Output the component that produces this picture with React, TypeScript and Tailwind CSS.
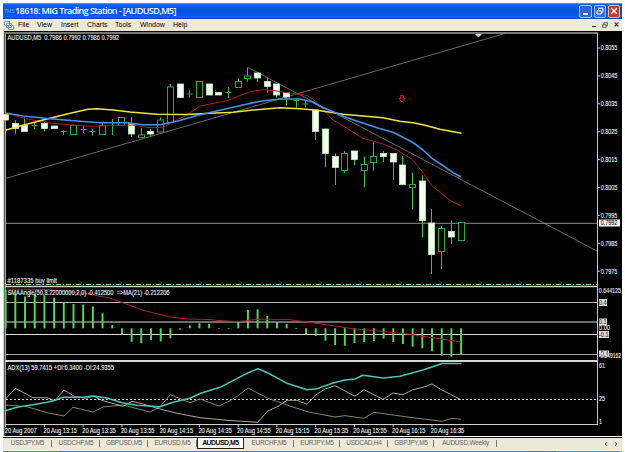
import { ChevronLeft } from "lucide-react";

type Kind = "up" | "down" | "doji";
// [kind, high, low, body top, body bottom]
type Candle = [Kind, number, number, number, number];

const CANDLES: Candle[] = [
  ["down", 114, 120, 114.5, 120],
  ["down", 120, 134, 123.5, 128.5],
  ["down", 117.5, 131.5, 125.5, 131.5],
  ["doji", 122.5, 129, 125.5, 125.5],
  ["down", 122, 131.5, 123.5, 128.5],
  ["down", 126, 128.5, 126, 128.5],
  ["doji", 130, 135, 131.5, 131.5],
  ["up", 125.5, 134.5, 125.5, 134.5],
  ["doji", 125.5, 133, 129.5, 129.5],
  ["doji", 129, 135.5, 131.5, 131.5],
  ["up", 123, 134.5, 125.5, 134.5],
  ["doji", 119, 135, 122.5, 122.5],
  ["up", 117.5, 125.5, 117.5, 125.5],
  ["down", 117, 137, 123.5, 134],
  ["up", 128, 137.5, 135, 137.5],
  ["down", 129, 137, 131.5, 134],
  ["up", 117.5, 132, 120, 132],
  ["up", 84, 122.5, 87, 122.5],
  ["down", 84, 97.5, 84, 97.5],
  ["doji", 89.5, 97.5, 94, 94],
  ["up", 81.5, 97.5, 81.5, 97.5],
  ["down", 84, 95, 84, 95],
  ["down", 92.5, 95, 92.5, 95],
  ["doji", 87, 98, 92.5, 92.5],
  ["up", 78.5, 87.5, 81.5, 87.5],
  ["up", 67.5, 81.5, 76, 78.5],
  ["down", 72, 82, 73, 78],
  ["down", 77.5, 92.5, 81.5, 86.5],
  ["down", 84, 97.5, 84, 95],
  ["down", 92.5, 105.5, 92.5, 97],
  ["doji", 99, 108, 100.5, 100.5],
  ["doji", 100.5, 107.5, 104, 104],
  ["down", 110, 140, 110, 131.5],
  ["down", 129, 167.5, 129, 153.5],
  ["down", 153.5, 185, 156.5, 167.5],
  ["up", 151, 173, 153.5, 170.5],
  ["down", 151, 165.5, 151, 159.5],
  ["up", 156.5, 187.5, 164.5, 170.5],
  ["up", 142, 170.5, 156.5, 162.5],
  ["down", 151, 162, 153.5, 156.5],
  ["down", 153.5, 180, 153.5, 162],
  ["down", 156, 184.5, 165, 184.5],
  ["up", 172.5, 209.5, 184.5, 187.5],
  ["down", 175.5, 237.5, 181, 220.5],
  ["down", 209, 274, 223, 254.5],
  ["up", 226, 269, 228.5, 251.5],
  ["down", 220.5, 244, 231.5, 237],
  ["up", 222.5, 240.5, 222.5, 240.5],
];

// end of each histogram bar, measured from the zero line
const ZERO_Y = 328.3;
const ANGLE = [
  290, 294, 296.5, 294, 295.5, 297.7, 302.5, 304, 304.5, 306.5, 313.3, 325,
  334.3, 341.7, 343.3, 340, 341.3, 338.3, 329.7, 325.3, 323.3, 324, 329, 329,
  322, 310, 309.3, 316, 322, 324, 329, 334.3, 336, 340.7, 345, 345.7, 343, 342,
  341, 338.7, 342, 344, 346.7, 348.3, 351.3, 355.7, 356.7, 354.7,
];

const MA_YELLOW =
  "5.5,130.3 20,126 43,120 67,114 88,109.3 97,108.7 113,110 130,112 157,114.3 187,114.5 205,113.5 233,112.3 253,110 280,107.7 300,108.7 317,110.3 343,114.3 383,117.7 400,121.3 413,122.7 423,124.7 440,129.3 461.5,133.3";
const MA_BLUE =
  "5.5,113 23,116 50,118.7 80,121.3 100,122.7 127,122.7 143,124.7 160,124.7 177,121.3 197,115.5 208,113 220,110.3 243,105 260,101.3 280,99 300,99 312,101.7 323,107.7 337,113.3 347,117.7 377,127.7 393,132.3 413,142.5 423,150 432,158.3 442,165 453,172.7 461,176.7";
const MA_RED =
  "5.5,113 27,119 53,123.3 73,125 90,126.3 113,125.5 133,125 147,127.5 163,127.7 173,121.7 187,115 200,106 227,100.7 250,91.7 263,89.7 275,90.7 287,92.7 307,95.3 315,100.7 323,109.3 333,120 347,128.3 363,138.3 383,144 397,150 412,159.3 423,172.3 432,186 452,201.7 461,205.7";
const ANGLE_MA =
  "5.5,289 50,289.7 67,291.5 87,294 110,298 122,302.5 143,310.3 170,317 187,319 210,319.5 217,320.3 237,321.7 257,319.3 287,319.3 307,322 333,325.7 353,328.7 380,331.3 410,334.3 430,337.3 461,342";
const ADX =
  "5,410.7 17,407.3 30,405.3 47,402.3 55,400.3 63,397.3 83,397.3 93,396 107,398 122,402.7 137,405.3 160,406.7 173,402.3 190,398.3 200,393.5 220,387.3 247,373.3 258,368.7 268,373 287,383.3 307,389.7 317,388.7 333,383 345,380 355,379 363,375.3 383,378 400,376.3 423,370 442,363.5 461.5,363.5";
const DI_MINUS =
  "5.5,399 15.3,388.3 33,397.7 47,397.7 55,400.7 64,390 75,396.7 87,398.3 93,396 103,400.7 123,406.3 132,401.3 143,404 160,409 177,413.3 200,417.7 227,420.3 257.7,422.3 267.7,411 278,406.3 287,400.3 297,400.3 307,404.3 315.7,395 325,389 335,385.7 355,396.3 364,389.7 383,399.3 393,393 403,394.7 412.7,389.7 423,387.3 432,384 442,390 461,399.7";
const DI_PLUS =
  "5.5,405 27,406.7 47,412.7 64,416 73,407.3 93,412 103,407 123,405 150,412 160,406.7 170.3,394.7 190,402.7 200,399 210,402.7 219,406 230,400.7 238,395.7 248,388 268,398.3 287,405 307,411.7 335,417 345,415.7 364,418.3 374,412.3 410,417.3 442,421.3 452,418.3 461,419.3";

const PRICES = ["0.8055", "0.8045", "0.8035", "0.8025", "0.8015", "0.8005", "0.7995", "0.7985", "0.7975"];
const TIMES = ["2007", "13:15", "13:35", "13:55", "14:15", "14:35", "14:55", "15:15", "15:35", "15:55", "16:15", "16:35"];

const MENU = [
  { label: "File", width: "w-[19px]" },
  { label: "View", width: "w-[24px]" },
  { label: "Insert", width: "w-[26px]" },
  { label: "Charts", width: "w-[28px]" },
  { label: "Tools", width: "w-[25px]" },
  { label: "Window", width: "w-[33px]" },
  { label: "Help", width: "w-[20px]" },
];

const TABS = [
  { label: "USDJPY,M5", width: "w-[49px]" },
  { label: "USDCHF,M5", width: "w-[48px]" },
  { label: "GBPUSD,M5", width: "w-[48px]" },
  { label: "EURUSD,M5", width: "w-[49px]" },
  { label: "AUDUSD,M5", width: "w-[47px]", active: true },
  { label: "EURCHF,M5", width: "w-[50px]" },
  { label: "EURJPY,M5", width: "w-[46px]" },
  { label: "USDCAD,H4", width: "w-[48px]" },
  { label: "GBPJPY,M5", width: "w-[46px]" },
  { label: "AUDUSD,Weekly", width: "w-[63px]" },
];

const barX = (i: number) => 5.6 + i * 9.69;

function Label({ x, y, w, fill = "#f2f2f2", children }: { x: number; y: number; w: number; fill?: string; children: string }) {
  return (
    <text
      x={x}
      y={y + 2.4}
      textLength={w}
      lengthAdjust="spacingAndGlyphs"
      fill={fill}
      stroke={fill}
      strokeWidth="0.1"
      className="whitespace-pre text-[6.6px]"
    >
      {children}
    </text>
  );
}

function CandleShape({ candle, index }: { candle: Candle; index: number }) {
  const [kind, high, low, top, bottom] = candle;
  const x = Math.round(barX(index) - 0.5) + 0.5;
  if (kind === "doji") {
    return <path d={`M${x} ${high}V${low}M${x - 3} ${top}h6`} stroke="#2fae3a" fill="none" />;
  }
  return (
    <g stroke="#3fc04a">
      <line x1={x} x2={x} y1={high} y2={low} />
      <rect
        x={x - 3}
        y={top}
        width={6}
        height={bottom - top}
        fill={kind === "down" ? "#f4fff0" : "#000"}
        stroke={kind === "down" ? "#c4f5bf" : "#2fa63a"}
        strokeWidth={kind === "down" ? 0.8 : 1}
      />
    </g>
  );
}

function Chart() {
  return (
    <svg width="619" height="405" viewBox="3 31 619 405" className="block shrink-0 bg-black">
      {/* window frame */}
      <rect x="3" y="31" width="1" height="405" fill="#d5d2c8" />
      <rect x="4" y="32" width="1" height="404" fill="#55554f" />
      <rect x="5" y="33" width="1" height="391" fill="#a5a5a5" />
      <rect x="4" y="32" width="594" height="2" fill="#777772" />

      {/* trend lines and bid price */}
      <g stroke="#858585" strokeWidth="0.8">
        <line x1="5.5" y1="178.5" x2="505" y2="33.5" />
        <line x1="248" y1="67.5" x2="597" y2="251" />
        <line x1="6" y1="223.3" x2="598" y2="223.3" stroke="#8c8c8c" strokeWidth="1" />
      </g>

      {CANDLES.map((c, i) => (
        <CandleShape key={i} candle={c} index={i} />
      ))}
      <g fill="none" strokeLinejoin="round">
        <polyline points={MA_RED} stroke="#a81c1c" strokeWidth="1" />
        <polyline points={MA_YELLOW} stroke="#eee63c" strokeWidth="1.5" />
        <polyline points={MA_BLUE} stroke="#3f94e8" strokeWidth="1.6" />
      </g>
      <path d="M400.5 95.5h3v3h1.5L402 102l-3-3.5h1.5z" fill="#300" stroke="#d42020" strokeWidth="0.9" />
      <path d="M475 34h7l-3.5 3.5z" fill="#d8d8d8" />

      {/* pending order */}
      <line x1="6" y1="284.5" x2="597" y2="284.5" stroke="#8ad88a" strokeDasharray="5 2 1 2" />
      <Label x={7.5} y={280.5} w={49.5}>#1187335 buy limit</Label>
      <Label x={7.5} y={38} w={111.5}>AUDUSD,M5  0.7986 0.7992 0.7986 0.7992</Label>

      {/* angle indicator */}
      <g stroke="#b8b8b8">
        <line x1="5" x2="598" y1="286.5" y2="286.5" stroke="#d4d4d4" strokeWidth="1.4" />
        <line x1="5" x2="598" y1="302.5" y2="302.5" />
        <line x1="5" x2="598" y1="322" y2="322" stroke="#909090" strokeWidth="1.4" />
        <line x1="5" x2="598" y1="334.5" y2="334.5" stroke="#dedede" />
        <line x1="5" x2="598" y1="354.5" y2="354.5" stroke="#a8a8a8" />
        <line x1="5" x2="598" y1="361" y2="361" stroke="#d6d6d2" strokeWidth="2" />
      </g>
      {ANGLE.map((y, i) => (
        <rect
          key={i}
          x={barX(i) - 0.9}
          y={Math.min(y, ZERO_Y)}
          width="1.9"
          height={Math.abs(y - ZERO_Y)}
          fill="#52dc52"
        />
      ))}
      <polyline points={ANGLE_MA} fill="none" stroke="#b02020" />
      <Label x={7.5} y={292.5} w={162}>SMAAngle(50,8.22000000,2,0) -0.412500  =&gt;MA(21) -0.212206</Label>

      {/* ADX */}
      <line x1="6" x2="597" y1="399.5" y2="399.5" stroke="#d0d0d0" strokeDasharray="2 2" />
      <g fill="none" strokeLinejoin="round">
        <polyline points={DI_PLUS} stroke="#8c9a5c" strokeWidth="0.9" />
        <polyline points={DI_MINUS} stroke="#c4b8ae" strokeWidth="0.9" />
        <polyline points={ADX} stroke="#48c4b8" strokeWidth="1.5" />
      </g>
      <Label x={7.5} y={367.5} w={106.5}>ADX(13) 59.7415 +DI:6.3400 -DI:24.9355</Label>

      {/* price scale */}
      <line x1="597.5" x2="597.5" y1="33" y2="425" stroke="#c8c8c8" />
      {PRICES.map((p, i) => (
        <g key={p}>
          <line x1="598" x2="600" y1={48 + i * 27.9} y2={48 + i * 27.9} stroke="#c8c8c8" />
          <Label x={600.7} y={48 + i * 27.9} w={16.5}>{p}</Label>
        </g>
      ))}
      <rect x="599" y="219.5" width="21" height="7" fill="#f4f4f4" />
      <Label x={600.7} y={223} w={16.5} fill="#111">0.7992</Label>

      <Label x={598.8} y={290.5} w={22.2}>0.644125</Label>
      <Label x={599} y={328} w={11}>0.00</Label>
      <g fill="#dadada">
        <rect x="599" y="299" width="8" height="7" />
        <rect x="599" y="318.5" width="8" height="7" />
        <rect x="599" y="331" width="10" height="7" />
        <rect x="599" y="350.5" width="10" height="6" />
      </g>
      <Label x={599} y={302.5} w={7.5} fill="#333">0.4</Label>
      <Label x={599} y={322} w={7.5} fill="#333">0.1</Label>
      <Label x={599} y={334.5} w={9.5} fill="#333">-0.1</Label>
      <Label x={599} y={353.5} w={9.5} fill="#333">-0.4</Label>
      <Label x={598.8} y={356} w={22.2}>-0.549162</Label>
      <Label x={599} y={366} w={6}>61</Label>
      <Label x={599} y={399} w={6}>25</Label>
      <Label x={599} y={421.5} w={3}>1</Label>

      {/* time scale */}
      <line x1="5" x2="598" y1="424.5" y2="424.5" stroke="#d0d0d0" />
      {TIMES.map((t, i) => (
        <g key={t}>
          <line x1={barX(i * 4)} x2={barX(i * 4)} y1="425" y2="427" stroke="#d0d0d0" />
          <Label x={4.8 + i * 38.72} y={430.5} w={i === 0 ? 32 : 33.5}>{`20 Aug ${t}`}</Label>
        </g>
      ))}
    </svg>
  );
}

function TitleBar() {
  return (
    <div className="flex h-[16px] shrink-0 items-center border-t border-[#4a92e8] border-b border-b-[#0a3cb4] bg-linear-to-b from-[#1264e8] via-[#0050dc] to-[#0a62f8] pr-[2px] text-white">
      <span className="w-[12px] pl-[1px] text-[5px] leading-none text-[#74a8ee]">TMS</span>
      <span className="flex-1 pb-px whitespace-nowrap font-['Open_Sans',sans-serif] text-[9px] leading-none font-semibold tracking-[-0.57px]">
        18618: MIG Trading Station - [AUDUSD,M5]
      </span>
      <div className="flex gap-[2px]">
        <span className="flex h-[13px] w-[13px] items-end rounded-[2px] border border-[#a8c4f8] bg-[#2f66e0] pb-[2px] pl-[3px]">
          <span className="h-[2px] w-[5px] bg-white" />
        </span>
        <span className="flex h-[13px] w-[12px] items-center justify-center rounded-[2px] border border-[#a8c4f8] bg-[#2f66e0]">
          <RestoreIcon />
        </span>
        <span className="flex h-[13px] w-[12px] items-center justify-center rounded-[2px] border border-[#eeb0a0] bg-[#cc3a24]">
          <CloseIcon />
        </span>
      </div>
    </div>
  );
}

function RestoreIcon() {
  return (
    <svg width="8" height="8" viewBox="0 0 8 8" fill="none" stroke="currentColor">
      <path d="M2.5 3V1.2h4.5V5H5.5" />
      <path d="M1 3.8h4.2V7H1z" />
    </svg>
  );
}

function CloseIcon() {
  return (
    <svg width="8" height="8" viewBox="0 0 8 8" stroke="currentColor" strokeWidth="1.5">
      <path d="M1.2 1.2l5.6 5.6M6.8 1.2L1.2 6.8" />
    </svg>
  );
}

function MenuBar() {
  return (
    <div className="flex h-[12px] shrink-0 items-center border-t border-[#f8f6ee] bg-[#ece9d8] pb-[2px] text-[7px] leading-none text-black">
      <svg width="10" height="9" viewBox="0 0 10 9" className="mt-[1px] mr-[4px] ml-[1px]" fill="#eef6ff" stroke="#5a9cd4">
        <path d="M.5.5h5v4h-5zM2.5 2.5h5v4h-5zM4.5 4.5h5v4h-5z" />
      </svg>
      {MENU.map((item) => (
        <span key={item.label} className={`${item.width} shrink-0 whitespace-nowrap`}>
          {item.label}
        </span>
      ))}
      <div className="ml-auto flex items-center gap-[6px] pr-[3px] text-[#333]">
        <span className="mt-[4px] h-px w-[4px] bg-[#222]" />
        <svg width="6" height="6" viewBox="0 0 8 8" fill="none" stroke="currentColor">
          <path d="M2.5 3V1h5v4H5.5M.8 3.5h4.4v4H.8z" />
        </svg>
        <svg width="5" height="5" viewBox="0 0 8 8" stroke="currentColor" strokeWidth="2">
          <path d="M1 1l6 6M7 1L1 7" />
        </svg>
      </div>
    </div>
  );
}

function TabBar() {
  return (
    <div className="flex h-[14px] shrink-0 items-center border-t border-b border-t-[#111] border-b-[#faf8f0] bg-[#ece9d8] pb-px text-[6.5px] leading-none text-[#66645c]">
      {TABS.map((tab) => (
        <span
          key={tab.label}
          className={
            tab.active
              ? `${tab.width} flex h-full shrink-0 items-center justify-center border-x border-b border-[#222] bg-white tracking-[-0.25px] text-black [text-shadow:0.3px_0_0_#000]`
              : `${tab.width} flex h-[7px] shrink-0 items-center justify-center border-r border-[#77756c] pl-[1px] whitespace-nowrap tracking-[-0.25px]`
          }
        >
          {tab.label}
        </span>
      ))}
      <div className="ml-auto flex gap-[4px] pr-[3px] text-[#222]">
        <ChevronLeft size={6} strokeWidth={4} />
        <ChevronLeft size={6} strokeWidth={4} className="rotate-180" />
      </div>
    </div>
  );
}

export default function App() {
  return (
    <div className="h-[452px] w-[625px] overflow-hidden bg-white pt-[3px] pl-[3px] font-['Liberation_Sans',Arial,sans-serif]">
      <div className="flex w-[619px] flex-col">
        <TitleBar />
        <MenuBar />
        <Chart />
        <div className="h-px bg-white" />
        <TabBar />
        <div className="flex h-[2px]">
          <div className="w-[56px] bg-[#48a048]" />
          <div className="flex-1 bg-[#3478e0]" />
          <div className="w-[66px] bg-[#22a0ec]" />
        </div>
      </div>
    </div>
  );
}
